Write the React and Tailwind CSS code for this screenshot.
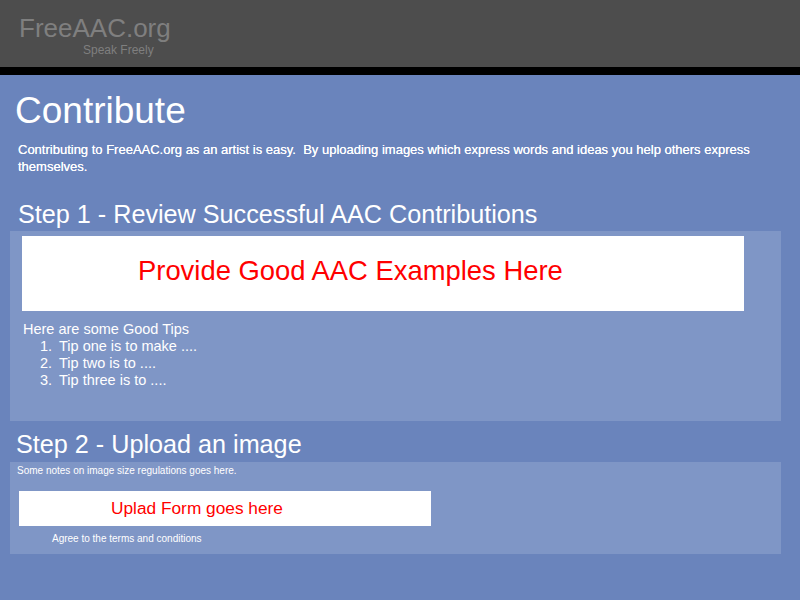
export default function App() {
  return (
    <div className="w-[800px] h-[600px] bg-[#6a84bc] font-['Liberation_Sans',Arial,sans-serif] text-white overflow-hidden">
      <div className="h-[67px] bg-[#4d4d4d] pl-[19px] pt-[13px]">
        <div className="text-[26px] leading-[30px] text-[#7f7f7f]">FreeAAC.org</div>
        <div className="text-[12px] leading-[14px] text-[#7f7f7f] pl-[64px]">Speak Freely</div>
      </div>
      <div className="h-[8px] bg-black" />
      <div className="pt-[15px]">
        <h1 className="pl-[15px] text-[37px] leading-[42px]">Contribute</h1>
        <p className="pl-[18px] pr-[40px] mt-[9px] text-[13px] leading-[17px] [text-shadow:0_0_0.4px_white]">
          Contributing to FreeAAC.org as an artist is easy.&nbsp; By uploading images which express words and ideas you help others express themselves.
        </p>
        <h2 className="pl-[18px] mt-[24px] pb-[2px] text-[25.2px] leading-[30px]">Step 1 - Review Successful AAC Contributions</h2>
        <div className="ml-[10px] w-[771px] h-[190px] bg-[#7f96c6] pt-[5px] pl-[12px]">
          <div className="w-[722px] h-[75px] bg-white pl-[116px] pt-[19px] text-[27.4px] leading-[32px] text-[#ff0000]">
            Provide Good AAC Examples Here
          </div>
          <div className="mt-[10px] pl-[1px] text-[14.5px] leading-[17px]">
            <div>Here are some Good Tips</div>
            <ol className="pl-[17px]">
              <li className="flex"><span className="w-[19px]">1.</span>Tip one is to make ....</li>
              <li className="flex"><span className="w-[19px]">2.</span>Tip two is to ....</li>
              <li className="flex"><span className="w-[19px]">3.</span>Tip three is to ....</li>
            </ol>
          </div>
        </div>
        <h2 className="pl-[16px] mt-[7px] pb-[2px] text-[25.2px] leading-[32px]">Step 2 - Upload an image</h2>
        <div className="ml-[10px] w-[771px] h-[92px] bg-[#7f96c6] pt-[3px]">
          <div className="pl-[7px] text-[10px] leading-[12px]">Some notes on image size regulations goes here.</div>
          <div className="ml-[9px] mt-[14px] w-[412px] h-[35px] bg-white pl-[92px] pt-[7px] text-[17.3px] leading-[21px] text-[#ff0000]">
            Uplad Form goes here
          </div>
          <div className="pl-[42px] mt-[7px] text-[10px] leading-[12px]">Agree to the terms and conditions</div>
        </div>
      </div>
    </div>
  );
}
